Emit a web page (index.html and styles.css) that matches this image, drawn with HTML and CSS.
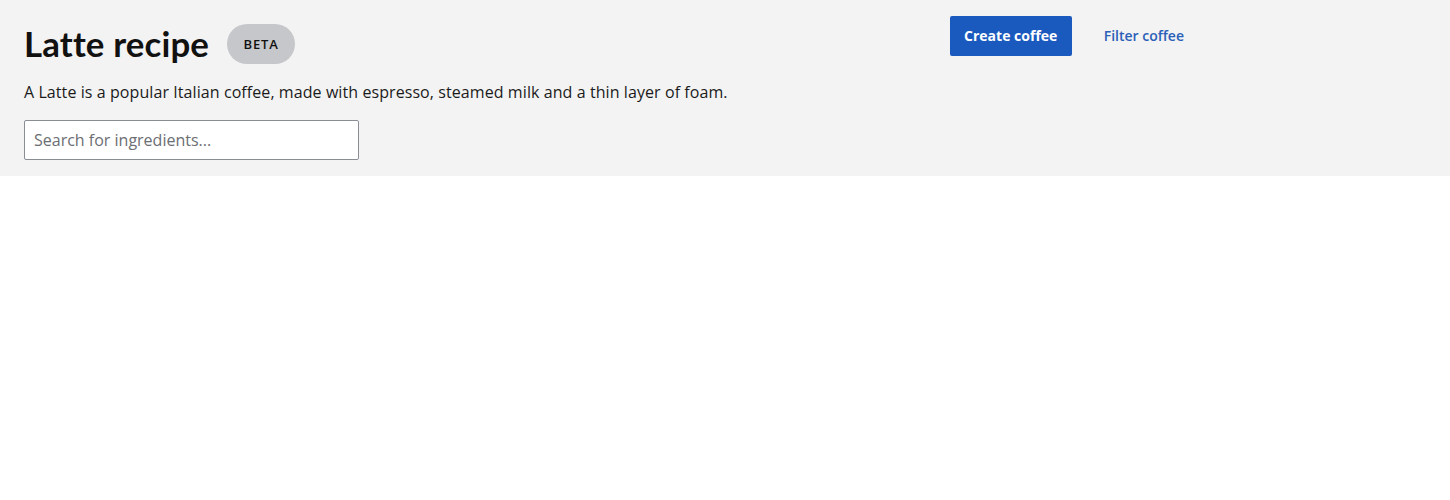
FILE: index.html
```html
<!DOCTYPE html>
<html lang="en">
<head>
<meta charset="utf-8">
<title>Latte recipe</title>
<link rel="stylesheet" href="styles.css">
</head>
<body>
<header class="page-header">
  <div class="header-inner">
    <div class="header-main">
      <div class="title-row">
        <h1 class="title">Latte recipe</h1>
        <span class="badge">BETA</span>
      </div>
      <p class="description">A Latte is a popular Italian coffee, made with espresso, steamed milk and a thin layer of foam.</p>
      <input class="search" type="text" placeholder="Search for ingredients...">
    </div>
    <div class="actions">
      <button class="btn btn-primary" type="button">Create coffee</button>
      <button class="btn btn-link" type="button">Filter coffee</button>
    </div>
  </div>
</header>
</body>
</html>
```
FILE: styles.css
```css
* { box-sizing: border-box; }
html, body { margin: 0; padding: 0; background: #ffffff; }
body { font-family: "Open Sans", "Liberation Sans", sans-serif; color: #1b1b1b; }

.page-header { background: #f3f3f3; height: 176px; }
.header-inner {
  max-width: 1200px;
  display: flex;
  justify-content: space-between;
  align-items: flex-start;
  padding: 16px 0 16px 24px;
}
.header-main { display: flex; flex-direction: column; }
.title-row { display: flex; align-items: center; gap: 18px; height: 56px; }
.title {
  margin: 0;
  font-family: "Lato", "Open Sans", sans-serif;
  font-weight: 700;
  font-size: 34.8px;
  letter-spacing: 0.15px;
  color: #111111;
  line-height: 40px;
}
.badge {
  display: inline-flex;
  align-items: center;
  justify-content: center;
  width: 68px;
  height: 40px;
  border-radius: 20px;
  background: #c6c7ca;
  font-size: 13px;
  font-weight: 600;
  letter-spacing: 0.8px;
  color: #111111;
}
.description {
  margin: 8px 0 0;
  font-size: 16px;
  line-height: 24px;
  letter-spacing: 0.08px;
  color: #1b1b1b;
}
.search {
  margin-top: 16px;
  width: 335px;
  height: 40px;
  border: 1px solid #8a8d94;
  border-radius: 2px;
  background: #ffffff;
  padding: 0 9px;
  font-family: "Open Sans", sans-serif;
  font-size: 16px;
  color: #1b1b1b;
}
.search::placeholder { color: #6b6e73; }
.actions { display: flex; align-items: center; }
.btn {
  height: 40px;
  padding: 0 16px;
  border: none;
  border-radius: 2px;
  font-family: "Open Sans", sans-serif;
  font-size: 14px;
  line-height: 38px;
  cursor: pointer;
}
.btn-primary { background: #1a5abf; color: #ffffff; font-weight: 700; width: 122px; padding: 0; }
.btn-link { background: transparent; color: #2b5fb8; font-weight: 600; margin-left: 16px; }
```
